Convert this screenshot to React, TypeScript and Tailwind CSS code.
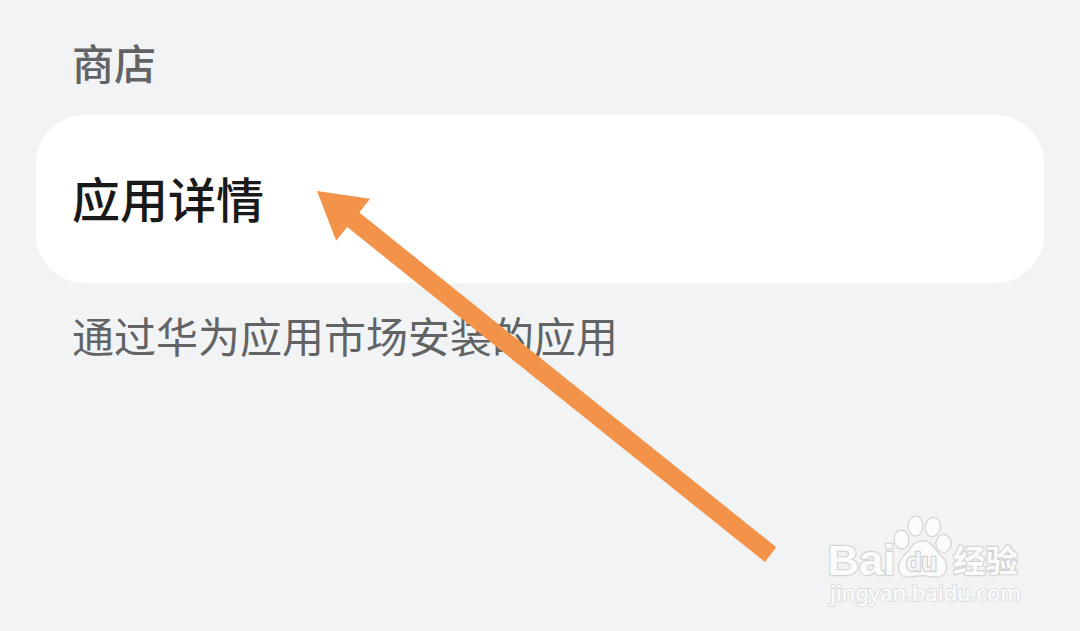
import React from 'react';

interface SettingsGroupProps {
  title: string;
  label: string;
  description: string;
}

function SettingsGroup({ title, label, description }: SettingsGroupProps) {
  return (
    <section className="px-9 pt-8">
      <h2 className="pl-[36px] text-[42px] leading-[60px] font-medium text-[#626365]">{title}</h2>
      <button className="mt-[23px] flex h-[168px] w-full items-center rounded-[48px] bg-white pb-[4px] pl-[36px] text-left text-[48px] leading-[64px] font-medium text-[#191919]">
        {label}
      </button>
      <p className="mt-[22px] pl-[36px] text-[42px] leading-[60px] text-[#626365]">{description}</p>
    </section>
  );
}

function PointerArrow() {
  return (
    <svg className="pointer-events-none absolute inset-0" width="1080" height="631" viewBox="0 0 1080 631">
      <path d="M317 191 L370 198.8 L359.3 212.5 L776.3 547.3 L764.8 562 L347.2 227 L336.2 240.7 Z" fill="#f39249" />
    </svg>
  );
}

function Watermark() {
  return (
    <svg
      className="pointer-events-none absolute top-[500px] left-[810px]"
      width="230"
      height="120"
      viewBox="0 0 230 120"
      fill="#fafbfb"
      stroke="#d3d4d6"
      strokeWidth="2.4"
      strokeLinejoin="round"
      paintOrder="stroke"
    >
      <text x="17.5" y="75" fontSize="43" fontWeight="700" textLength="68" lengthAdjust="spacingAndGlyphs" className="font-['Liberation_Sans']">
        Bai
      </text>
      {/* paw */}
      <g>
        <ellipse cx="91.5" cy="39.5" rx="6.8" ry="8.8" transform="rotate(-8 91.5 39.5)" />
        <ellipse cx="105.5" cy="26" rx="6.8" ry="9.4" />
        <ellipse cx="122.8" cy="27" rx="7" ry="9" transform="rotate(12 122.8 27)" />
        <ellipse cx="133.5" cy="43.5" rx="7" ry="8.6" />
        <path d="M112.5 41.5 C105 41.5 102.5 46 99 51 C95 56 89 60 89 67 C89 74 93 77 99 76.5 C104 76 108 75 112.5 75 C117 75 122 77 127 76.5 C133 76 136 72 136 67 C136 59 130 56 126 51 C122 46 120 41.5 112.5 41.5 Z" />
      </g>
      <text x="96" y="71" fontSize="26" fontWeight="700" textLength="31" lengthAdjust="spacingAndGlyphs" fill="#f4f5f6" stroke="#cfd0d2" className="font-['Liberation_Sans']">
        du
      </text>
      <text x="143" y="72" fontSize="31" fontWeight="700" textLength="65" lengthAdjust="spacingAndGlyphs" className="font-['Noto_Sans_CJK_SC',sans-serif]">
        经验
      </text>
      <text x="20" y="101" fontSize="22" fontWeight="500" textLength="191" strokeWidth="2" stroke="#dddee0" className="font-['Noto_Sans',sans-serif]">
        jingyan.baidu.com
      </text>
    </svg>
  );
}

export default function App() {
  return (
    <main className="relative h-[631px] w-[1080px] overflow-hidden bg-[#f1f3f5] font-['Noto_Sans_CJK_SC',sans-serif]">
      <SettingsGroup title="商店" label="应用详情" description="通过华为应用市场安装的应用" />
      <PointerArrow />
      <Watermark />
    </main>
  );
}
